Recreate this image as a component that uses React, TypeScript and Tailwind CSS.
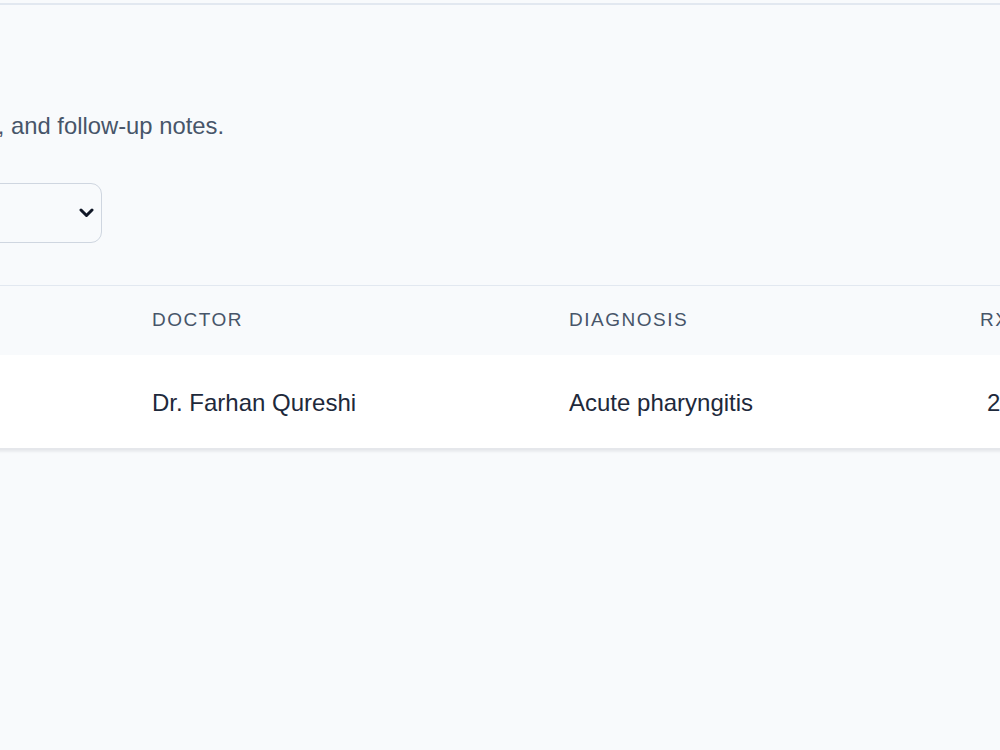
const rows = [
  {
    date: "12 Mar 2024",
    doctor: "Dr. Farhan Qureshi",
    diagnosis: "Acute pharyngitis",
    rx: "2",
  },
];

function Chevron() {
  return (
    <svg width="15" height="10" viewBox="0 0 15 10" fill="none">
      <path
        d="M2 2l5.5 5.5L13 2"
        stroke="#111827"
        strokeWidth="3"
        strokeLinecap="round"
        strokeLinejoin="round"
      />
    </svg>
  );
}

export default function App() {
  return (
    <div
      className="w-[1000px] h-[750px] overflow-hidden bg-[#f8fafc] text-[#1e293b]"
      style={{ fontFamily: '"Liberation Sans", Arial, sans-serif' }}
    >
      <div className="h-[3px] bg-[#f8fafc]" />
      <div className="h-[2px] bg-[#e2e8f0]" />

      <div className="ml-[-200px] w-[1400px]">
        <div className="pt-[101px]">
          <p className="flex justify-end w-[424px] whitespace-nowrap text-[23.8px] leading-[40px] text-[#475569]">
            View past visits, prescriptions, and follow-up notes.
          </p>
        </div>

        <div className="mt-[37px] flex">
          <div className="w-[302px] h-[60px] rounded-[11px] border-[1.5px] border-[#cfd6e0] bg-[#f8fafc] flex items-center justify-end pr-[7px]">
            <Chevron />
          </div>
        </div>

        <div className="mt-[42px] border-t-[1.5px] border-[#e2e8f0] shadow-[0_2px_2px_rgba(15,23,42,0.06)]">
          <div className="flex h-[69px] items-center bg-[#f8fafc] text-[19px] tracking-[0.08em] uppercase text-[#475569]">
            <div className="w-[352px] pl-[24px]">Date</div>
            <div className="w-[417px]">Doctor</div>
            <div className="w-[411px]">Diagnosis</div>
            <div className="w-[220px]">Rx</div>
          </div>
          {rows.map((r) => (
            <div
              key={r.doctor}
              className="flex h-[95px] pt-[3px] items-center bg-white border-b-[2px] border-[#e5e7eb] text-[24px] text-[#1e293b]"
            >
              <div className="w-[352px] pl-[24px]">{r.date}</div>
              <div className="w-[417px]">{r.doctor}</div>
              <div className="w-[411px]">{r.diagnosis}</div>
              <div className="w-[220px] pl-[7px]">{r.rx}</div>
            </div>
          ))}
        </div>
      </div>
    </div>
  );
}
